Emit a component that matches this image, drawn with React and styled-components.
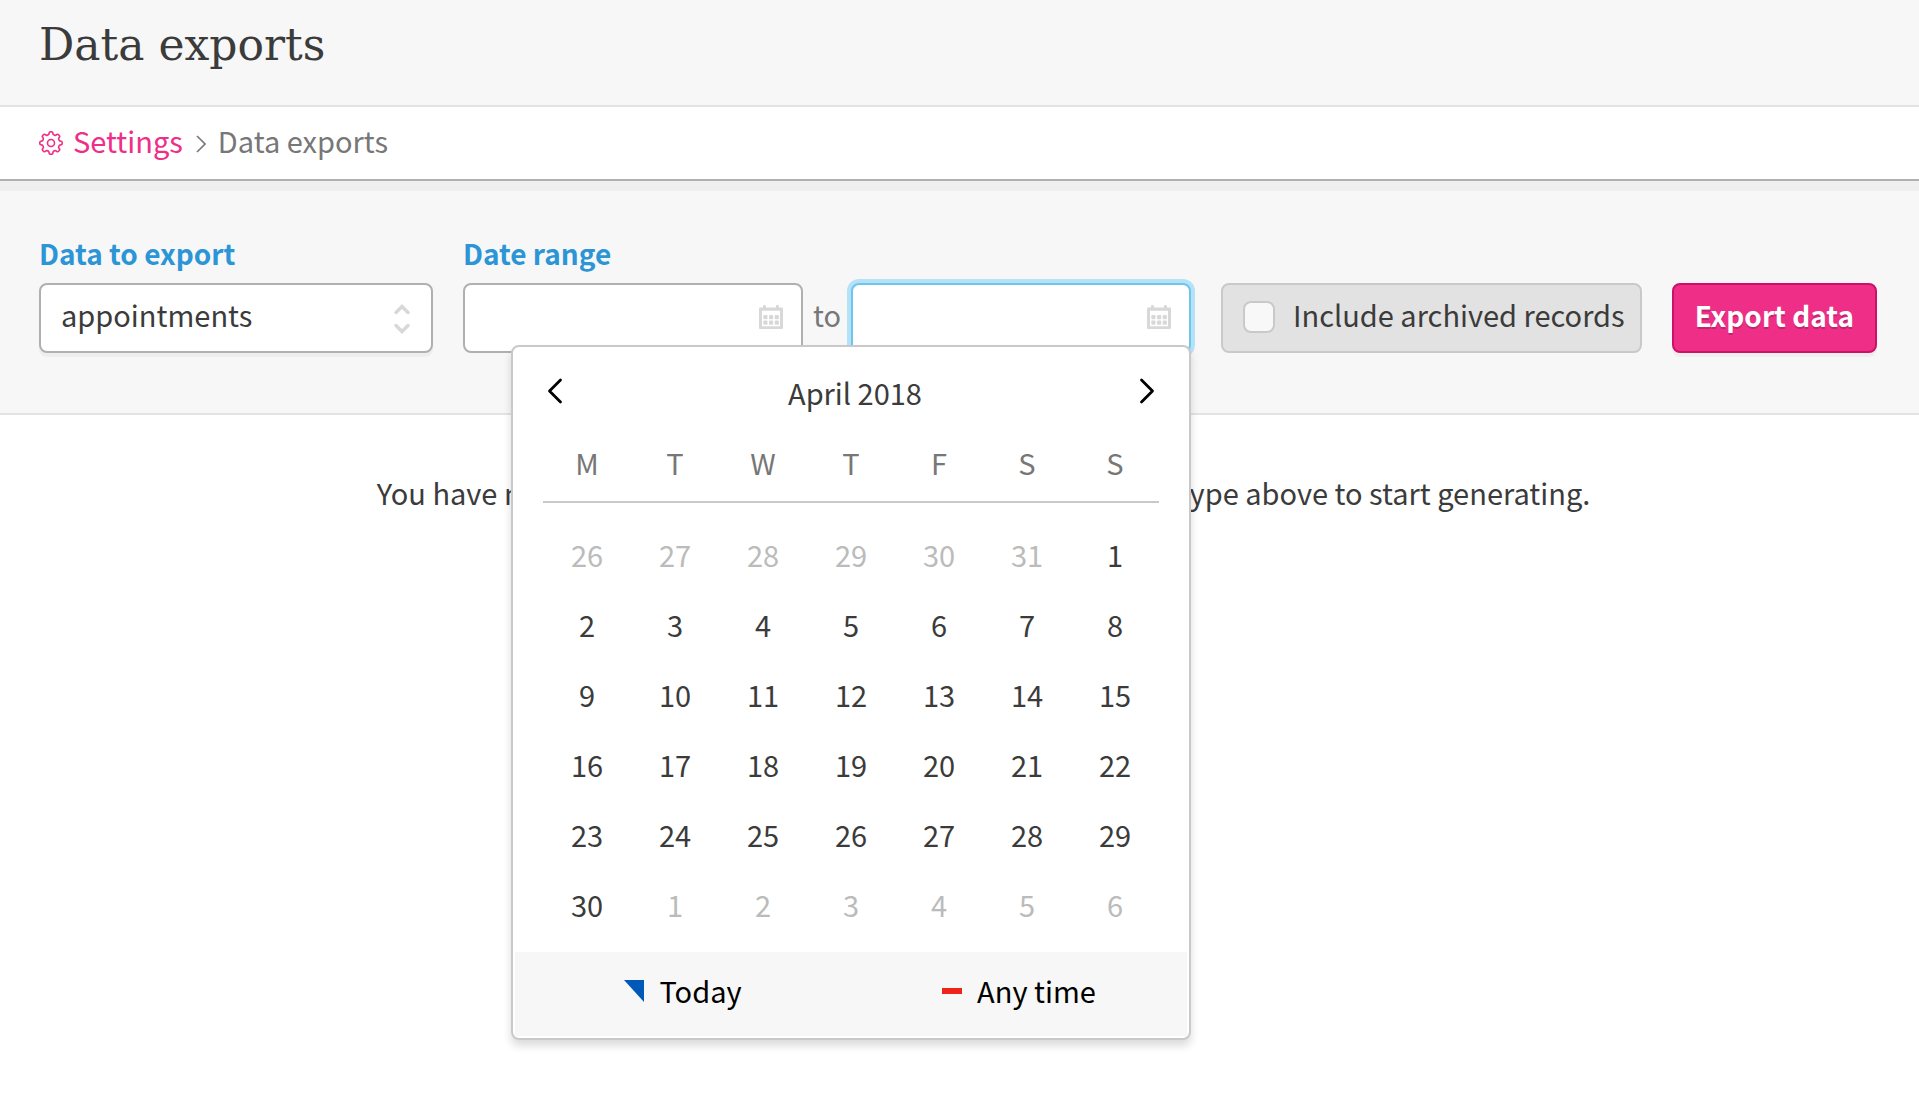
import React, { useState } from 'react'
import styled, { createGlobalStyle, css } from 'styled-components'

const GlobalStyle = createGlobalStyle`
    * {
        box-sizing: border-box;
    }

    body {
        margin: 0;
        background: #fff;
        color: #3b3b3b;
        font-family: 'Noto Sans CJK SC', 'Noto Sans', sans-serif;
        font-size: 29px;
        line-height: 40px;
    }

    button, input, select {
        font: inherit;
        color: inherit;
    }
`

const Page = styled.div`
    min-height: 100vh;
`

const PageHeader = styled.header`
    height: 107px;
    padding: 17px 39px;
    background: #f7f7f7;
    border-bottom: 2px solid #e3e3e3;
`

const PageTitle = styled.h1`
    margin: 0;
    font-family: 'Roboto Slab', 'DejaVu Serif', serif;
    font-size: 44px;
    font-weight: 400;
    line-height: 56px;
`

const Breadcrumbs = styled.nav`
    display: flex;
    align-items: center;
    height: 74px;
    padding: 0 39px 6px;
    border-bottom: 2px solid #b0b0b0;
    color: #777;
`

const CrumbLink = styled.a`
    display: flex;
    align-items: center;
    gap: 10px;
    color: #ee2e87;
    text-decoration: none;

    svg {
        margin-top: 5px;
    }
`

const CrumbChevron = styled.svg`
    margin: 8px 12px 0 13px;
`

const FilterBar = styled.form`
    display: flex;
    align-items: flex-end;
    gap: 30px;
    padding: 42px 42px 60px 39px;
    background: #f7f7f7;
    border-top: 10px solid #efefef;
    border-bottom: 2px solid #e3e3e3;
`

const Field = styled.div`
    display: flex;
    flex-direction: column;
    gap: 10px;
    flex: ${props => props.$basis || 'none'};
`

const FieldLabel = styled.label`
    color: #2b95d6;
    font-size: 28px;
    font-weight: 700;
`

const controlBox = css`
    height: 70px;
    border: 2px solid #b0b0b0;
    border-radius: 8px;
`

const SelectWrap = styled.div`
    position: relative;

    svg {
        position: absolute;
        top: 20px;
        right: 22px;
        pointer-events: none;
    }
`

const Select = styled.select`
    ${controlBox}
    width: 100%;
    padding: 0 60px 8px 20px;
    appearance: none;
    background: #fff;
    box-shadow: 0 4px 0 #eee;
`

const DateRange = styled.div`
    display: flex;
    align-items: center;
`

const DateField = styled.div`
    position: relative;
    width: 340px;

    > svg {
        position: absolute;
        top: 22px;
        right: 20px;
        pointer-events: none;
    }
`

const DateInput = styled.input`
    ${controlBox}
    display: block;
    width: 100%;
    padding: 0 60px 8px 20px;
    background: #fff;
    outline: none;

    ${props =>
        props.$open &&
        css`
            border-color: #6ec6ef;
            box-shadow: 0 0 0 4px #b5e2f7;
        `}
`

const RangeWord = styled.span`
    width: 48px;
    padding-bottom: 8px;
    color: #777;
    text-align: center;
`

const CheckPanel = styled.label`
    ${controlBox}
    display: flex;
    align-items: center;
    gap: 18px;
    padding: 0 15px 2px 20px;
    border-color: #c9c9c9;
    background: #e2e2e2;
    white-space: nowrap;

    span {
        padding-bottom: 6px;
    }
`

const Checkbox = styled.input`
    width: 32px;
    height: 32px;
    margin: 0;
    appearance: none;
    background: #f8f8f8;
    border: 2px solid #c9c9c9;
    border-radius: 8px;
`

const ExportButton = styled.button`
    ${controlBox}
    padding: 0 21px 6px;
    border-color: #cd1169;
    background: #ee2e87;
    box-shadow: 0 4px 0 #eee;
    color: #fff;
    font-size: 28px;
    font-weight: 700;
    text-shadow: 0 2px 0 rgba(0, 0, 0, 0.2);
    white-space: nowrap;
`

const Picker = styled.div`
    position: absolute;
    top: 62px;
    right: 0;
    z-index: 5;
    width: 680px;
    padding: 2px;
    background: #fff;
    border: 2px solid #c9c9c9;
    border-radius: 8px;
    box-shadow: 0 6px 8px rgba(0, 0, 0, 0.14);
`

const PickerHeader = styled.div`
    display: flex;
    align-items: center;
    justify-content: space-between;
    padding: 23px 28px 0;
`

const MonthName = styled.span`
    padding-left: 8px;
`

const ArrowButton = styled.button`
    display: flex;
    padding: 0 4px 2px;
    background: none;
    border: 0;
    color: #000;
`

const MonthGrid = styled.table`
    width: 616px;
    margin: 24px auto 12px;
    border-collapse: separate;
    border-spacing: 0;
    table-layout: fixed;
    text-align: center;

    th {
        height: 67px;
        padding: 0 0 13px;
        border-bottom: 2px solid #c9c9c9;
        color: #777;
        font-weight: 400;
    }

    td {
        height: 70px;
        padding: 0;
    }

    tbody::before {
        content: '';
        display: block;
        height: 17px;
    }
`

const Day = styled.button`
    width: 100%;
    height: 70px;
    padding: 0 0 2px;
    background: none;
    border: 0;
    color: ${props => (props.$outside ? '#bbb' : '#3b3b3b')};
`

const PickerFooter = styled.div`
    display: grid;
    grid-template-columns: 1fr 1fr;
    height: 84px;
    background: #f7f7f7;
`

const FooterButton = styled.button`
    display: flex;
    align-items: center;
    justify-content: center;
    gap: 15px;
    padding: 0 0 8px;
    background: none;
    border: 0;
    color: #000;

    svg {
        margin-top: 2px;
    }
`

const EmptyMessage = styled.p`
    margin: 0;
    padding: 57px 0 0 48px;
    text-align: center;
`

const WEEKDAYS = ['M', 'T', 'W', 'T', 'F', 'S', 'S']

// April 2018 starts on a Sunday, so the grid opens on 26 March
function getWeeks() {
    const weeks = []
    for (let week = 0; week < 6; week++) {
        const days = []
        for (let day = 0; day < 7; day++) {
            const date = new Date(2018, 2, 26 + week * 7 + day)
            days.push({ number: date.getDate(), outside: date.getMonth() !== 3 })
        }
        weeks.push(days)
    }
    return weeks
}

// Eight rounded teeth with a scallop between each pair
function getGearPath() {
    const point = (radius, degrees) => {
        const angle = (degrees * Math.PI) / 180
        const x = 12 + radius * Math.cos(angle)
        const y = 12 + radius * Math.sin(angle)
        return `${x.toFixed(2)} ${y.toFixed(2)}`
    }
    let path = `M${point(8.9, -14)}`
    for (let tooth = 0; tooth < 360; tooth += 45) {
        path += `L${point(10.4, tooth - 10)}Q${point(11.4, tooth - 8)} ${point(11.2, tooth)}`
        path += `Q${point(11.4, tooth + 8)} ${point(10.4, tooth + 10)}L${point(8.9, tooth + 14)}`
        path += `Q${point(8.1, tooth + 22.5)} ${point(8.9, tooth + 31)}`
    }
    return path + 'Z'
}

const GearIcon = () => (
    <svg width="24" height="24" viewBox="0 0 24 24" fill="none" stroke="currentColor" strokeWidth="1.6" strokeLinejoin="round">
        <path d={getGearPath()} />
        <circle cx="12" cy="12" r="3.5" />
    </svg>
)

const CalendarIcon = () => (
    <svg width="24" height="24" viewBox="0 0 24 24" fill="#d8d8d8">
        <path fillRule="evenodd" d="M1 2.5H4V1.2a1.4 1.4 0 0 1 2.8 0V2.5H17V1.2a1.4 1.4 0 0 1 2.8 0V2.5H23a1 1 0 0 1 1 1V23a1 1 0 0 1-1 1H1a1 1 0 0 1-1-1V3.5a1 1 0 0 1 1-1ZM3 5.7V21.3H21V5.7Z" />
        {[4.3, 10, 15.7].map(x =>
            [10, 15.6].map(y => <rect key={`${x}-${y}`} x={x} y={y} width="4.2" height="4.2" rx="1" />)
        )}
    </svg>
)

const ArrowIcon = ({ d }) => (
    <svg width="16" height="28" viewBox="0 0 16 28" fill="none" stroke="currentColor" strokeWidth="2.8" strokeLinecap="round" strokeLinejoin="round">
        <path d={d} />
    </svg>
)

const DatePicker = () => (
    <Picker>
        <PickerHeader>
            <ArrowButton type="button" aria-label="Previous month">
                <ArrowIcon d="M13.5 3 2.5 14 13.5 25" />
            </ArrowButton>
            <MonthName>April 2018</MonthName>
            <ArrowButton type="button" aria-label="Next month">
                <ArrowIcon d="M2.5 3 13.5 14 2.5 25" />
            </ArrowButton>
        </PickerHeader>
        <MonthGrid>
            <thead>
                <tr>
                    {WEEKDAYS.map((name, index) => (
                        <th key={index}>{name}</th>
                    ))}
                </tr>
            </thead>
            <tbody>
                {getWeeks().map((days, week) => (
                    <tr key={week}>
                        {days.map((day, index) => (
                            <td key={index}>
                                <Day type="button" $outside={day.outside}>
                                    {day.number}
                                </Day>
                            </td>
                        ))}
                    </tr>
                ))}
            </tbody>
        </MonthGrid>
        <PickerFooter>
            <FooterButton type="button">
                <svg width="20" height="22" viewBox="0 0 20 22">
                    <path d="M0 0H20V22Z" fill="#0059b8" />
                </svg>
                Today
            </FooterButton>
            <FooterButton type="button">
                <svg width="20" height="6" viewBox="0 0 20 6">
                    <path d="M0 0H20V6H0Z" fill="#ee2419" />
                </svg>
                Any time
            </FooterButton>
        </PickerFooter>
    </Picker>
)

export default function App() {
    const [archived, setArchived] = useState(false)

    return (
        <Page>
            <GlobalStyle />
            <PageHeader>
                <PageTitle>Data exports</PageTitle>
            </PageHeader>
            <Breadcrumbs>
                <CrumbLink href="#settings">
                    <GearIcon />
                    Settings
                </CrumbLink>
                <CrumbChevron width="10" height="18" viewBox="0 0 10 18" fill="none" stroke="currentColor" strokeWidth="1.6">
                    <path d="M1 1 9 9 1 17" />
                </CrumbChevron>
                <span>Data exports</span>
            </Breadcrumbs>
            <FilterBar>
                <Field $basis="1 1 0">
                    <FieldLabel htmlFor="export-type">Data to export</FieldLabel>
                    <SelectWrap>
                        <Select id="export-type" defaultValue="appointments">
                            <option>appointments</option>
                        </Select>
                        <svg width="18" height="32" viewBox="0 0 18 32" fill="none" stroke="#d8d8d8" strokeWidth="3.5" strokeLinecap="round">
                            <path d="M3 9.5 9 3.5 15 9.5M3 22.5 9 28.500 15 22.5" />
                        </svg>
                    </SelectWrap>
                </Field>
                <Field>
                    <FieldLabel htmlFor="date-from">Date range</FieldLabel>
                    <DateRange>
                        <DateField>
                            <DateInput id="date-from" type="text" />
                            <CalendarIcon />
                        </DateField>
                        <RangeWord>to</RangeWord>
                        <DateField>
                            <DateInput type="text" aria-label="Date range end" $open />
                            <CalendarIcon />
                            <DatePicker />
                        </DateField>
                    </DateRange>
                </Field>
                <CheckPanel>
                    <Checkbox
                        type="checkbox"
                        checked={archived}
                        onChange={event => setArchived(event.target.checked)}
                    />
                    <span>Include archived records</span>
                </CheckPanel>
                <ExportButton type="button">Export data</ExportButton>
            </FilterBar>
            <EmptyMessage>
                You have no data exports saved. Please select a data export type above to start generating.
            </EmptyMessage>
        </Page>
    )
}
